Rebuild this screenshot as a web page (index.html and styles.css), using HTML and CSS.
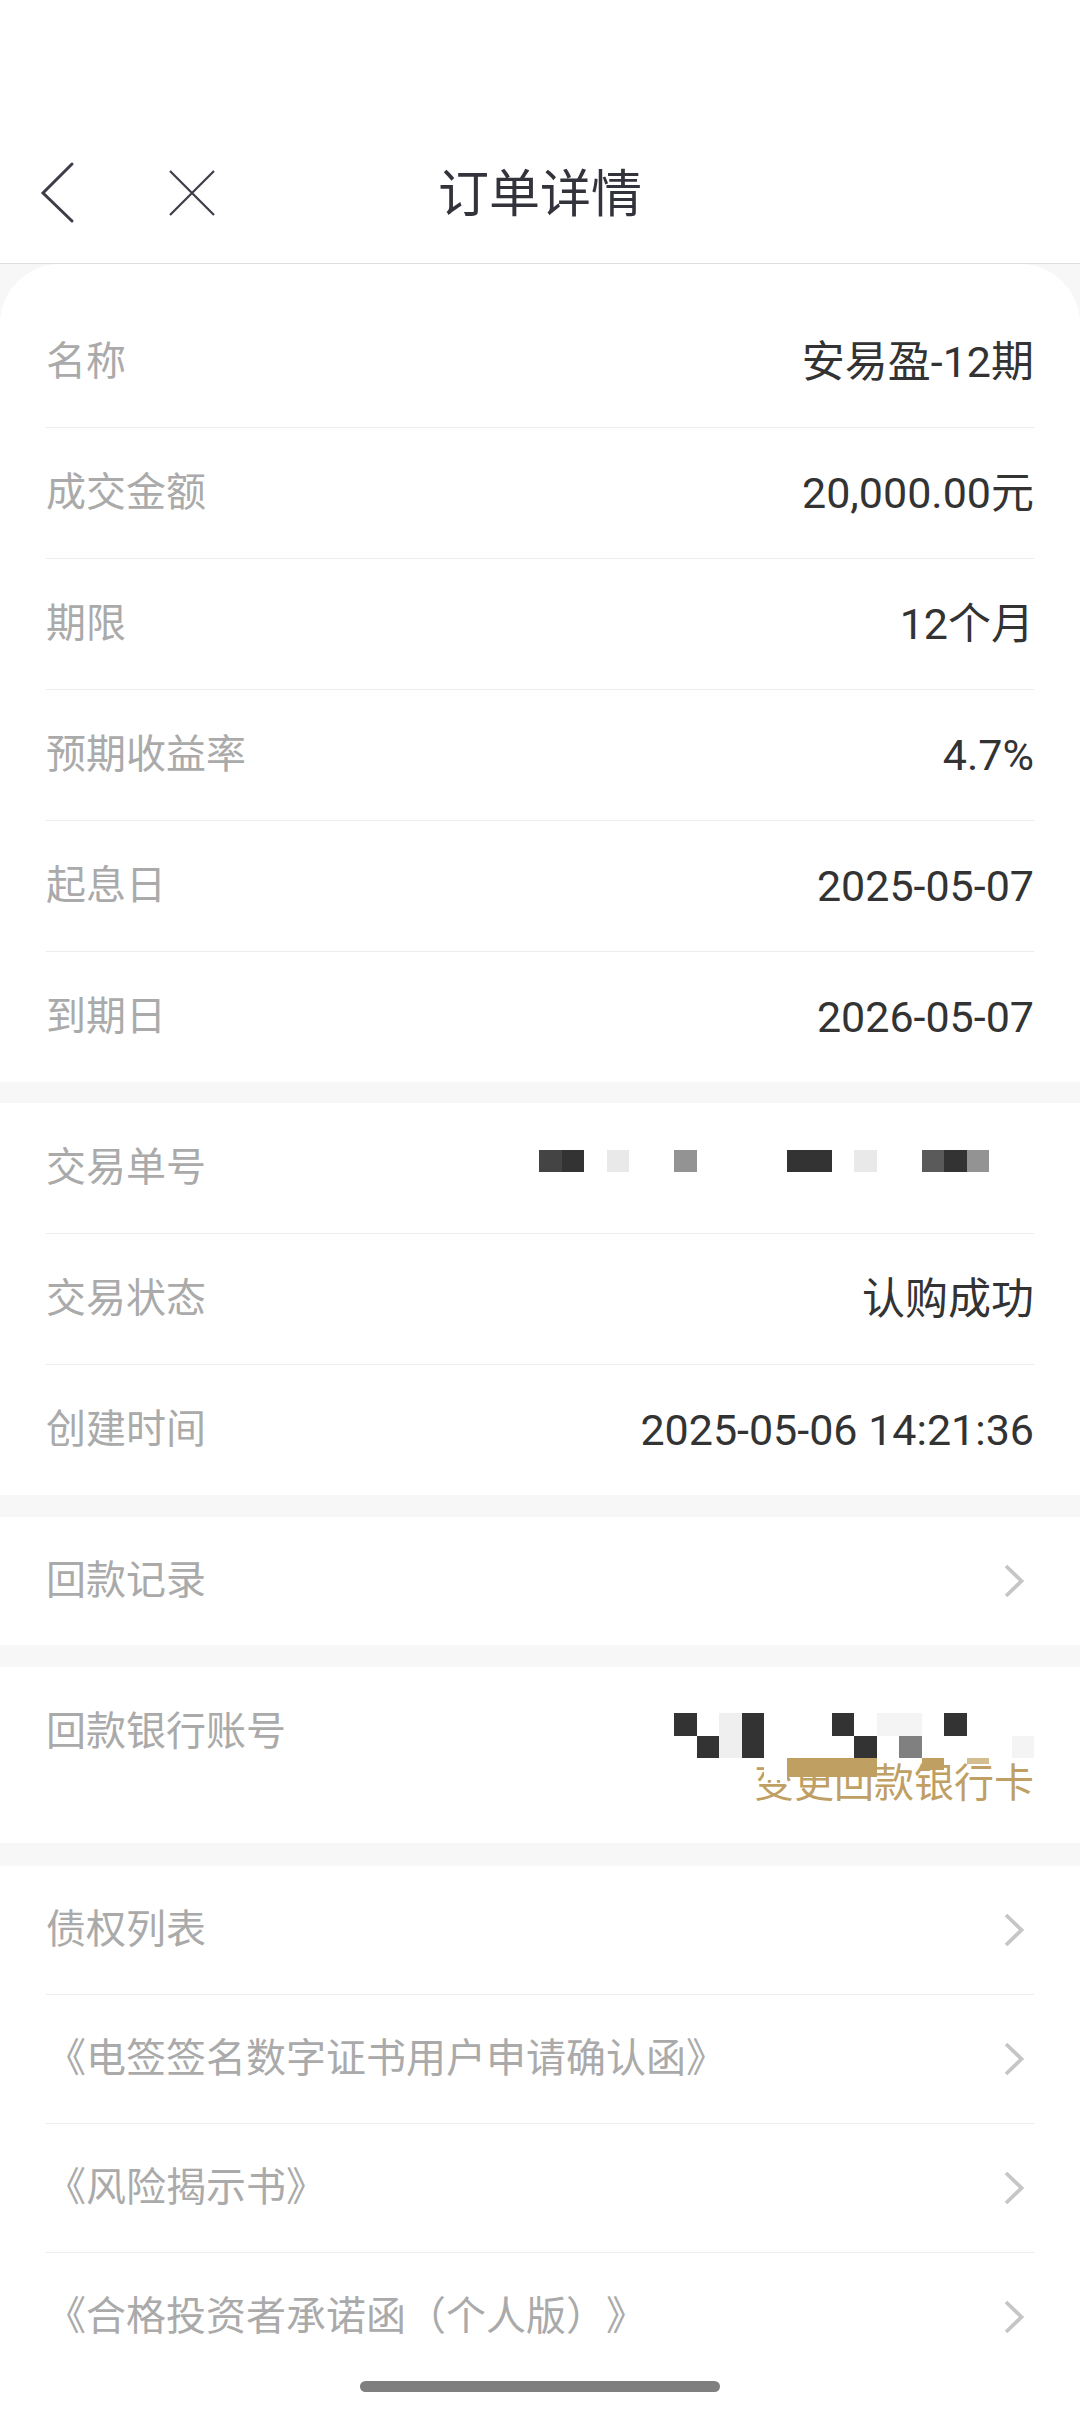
FILE: index.html
```html
<!DOCTYPE html>
<html lang="zh-CN">
<head>
<meta charset="utf-8">
<title>订单详情</title>
<link rel="stylesheet" href="styles.css">
</head>
<body>
<div class="page">
  <div class="statusbar"></div>
  <header class="header">
    <div class="nav">
      <svg class="back" width="40" height="64" viewBox="0 0 40 64"><polyline points="34,3 5,32 34,60"/></svg>
      <svg class="close" width="52" height="52" viewBox="0 0 52 52"><path d="M4 4 L48 48 M48 4 L4 48"/></svg>
    </div>
    <h1 class="title">订单详情</h1>
    <div class="spacer"></div>
  </header>

  <main class="content">
    <section class="card card-top">
      <div class="row"><span class="label">名称</span><span class="value">安易盈-12期</span></div>
      <div class="row"><span class="label">成交金额</span><span class="value">20,000.00元</span></div>
      <div class="row"><span class="label">期限</span><span class="value">12个月</span></div>
      <div class="row"><span class="label">预期收益率</span><span class="value">4.7%</span></div>
      <div class="row"><span class="label">起息日</span><span class="value">2025-05-07</span></div>
      <div class="row"><span class="label">到期日</span><span class="value">2026-05-07</span></div>
    </section>

    <section class="card card-trade">
      <div class="row">
        <span class="label">交易单号</span>
        <div class="mosaic mosaic-order">
          <i class="d2"></i><i class="d"></i><i></i><i class="l"></i><i></i><i></i><i class="g"></i><i></i><i></i><i></i><i></i>
          <i class="d"></i><i class="d"></i><i></i><i class="l"></i><i></i><i></i><i class="m"></i><i class="d"></i><i class="g"></i><i></i><i></i>
        </div>
      </div>
      <div class="row"><span class="label">交易状态</span><span class="value">认购成功</span></div>
      <div class="row"><span class="label">创建时间</span><span class="value">2025-05-06 14:21:36</span></div>
    </section>

    <section class="card card-gap">
      <div class="link-row"><span class="label">回款记录</span><svg class="chev" width="24" height="36" viewBox="0 0 24 36"><polyline points="4,3 19.5,18 4,33"/></svg></div>
    </section>

    <section class="card card-gap bank">
      <span class="label">回款银行账号</span>
      <div class="acct">
        <div class="mosaic mosaic-acct">
          <i class="d"></i><i></i><i class="l2"></i><i class="d"></i><i></i><i></i><i></i><i class="d"></i><i></i><i class="vl"></i><i class="vl"></i><i></i><i class="d"></i><i></i><i></i><i></i>
          <i></i><i class="d"></i><i class="l2"></i><i class="d"></i><i></i><i></i><i></i><i></i><i class="d"></i><i></i><i class="g2"></i><i></i><i></i><i></i><i></i><i class="vl"></i>
        </div>
        <span class="change">变更回款银行卡</span>
        <div class="mosaic mosaic-over">
          <i></i><i></i><i></i><i></i><i class="wh"></i><i class="o"></i><i class="o"></i><i class="o"></i><i class="o"></i><i></i><i></i><i class="o o-short"></i><i></i><i class="o o-tiny"></i><i></i><i></i>
        </div>
      </div>
    </section>

    <section class="card card-gap card-docs">
      <div class="link-row"><span class="label">债权列表</span><svg class="chev" width="24" height="36" viewBox="0 0 24 36"><polyline points="4,3 19.5,18 4,33"/></svg></div>
      <div class="link-row"><span class="label">《电签签名数字证书用户申请确认函》</span><svg class="chev" width="24" height="36" viewBox="0 0 24 36"><polyline points="4,3 19.5,18 4,33"/></svg></div>
      <div class="link-row"><span class="label">《风险揭示书》</span><svg class="chev" width="24" height="36" viewBox="0 0 24 36"><polyline points="4,3 19.5,18 4,33"/></svg></div>
      <div class="link-row"><span class="label">《合格投资者承诺函（个人版）》</span><svg class="chev" width="24" height="36" viewBox="0 0 24 36"><polyline points="4,3 19.5,18 4,33"/></svg></div>
    </section>
  </main>

  <div class="home-indicator"></div>
</div>
</body>
</html>
```

FILE: styles.css
```css
* {
  box-sizing: border-box;
  margin: 0;
  padding: 0;
}

html,
body {
  width: 1080px;
  height: 2412px;
  overflow: hidden;
}

body {
  background: #f7f7f7;
  font-family: Roboto, "Noto Sans CJK SC", sans-serif;
  color: #333;
  text-spacing-trim: space-all;
}

.page {
  position: relative;
  height: 2412px;
}

.statusbar {
  height: 126px;
  background: #fff;
}

.header {
  height: 138px;
  background: #fff;
  border-bottom: 1px solid #dedede;
  display: grid;
  grid-template-columns: 1fr auto 1fr;
  align-items: center;
}

.nav {
  display: flex;
  align-items: center;
  gap: 88px;
  padding-left: 38px;
}

.nav svg {
  margin-bottom: 4px;
  fill: none;
  stroke: #3d3d47;
}

.back {
  stroke-width: 3;
  stroke-linecap: round;
  stroke-linejoin: miter;
}

.close {
  stroke-width: 2.2;
}

.title {
  font-size: 51px;
  font-weight: 400;
  line-height: 60px;
  color: #33333b;
}

.content {
  display: flex;
  flex-direction: column;
}

.card {
  background: #fff;
}

.card-top {
  border-radius: 60px 60px 0 0;
  padding-top: 33px;
}

.card-trade {
  margin-top: 21px;
}

.card-gap {
  margin-top: 22px;
}

.card-docs {
  margin-top: 23px;
  padding-bottom: 40px;
}

.row {
  height: 131px;
  margin: 0 46px;
  display: flex;
  align-items: center;
  justify-content: space-between;
  border-bottom: 1px solid #ececec;
}

.row:last-child {
  height: 130px;
  border-bottom: none;
}

.link-row {
  height: 129px;
  margin: 0 46px;
  display: flex;
  align-items: center;
  justify-content: space-between;
  border-bottom: 1px solid #ececec;
}

.link-row:last-child {
  height: 128px;
  border-bottom: none;
}

.label {
  font-size: 40px;
  line-height: 50px;
  color: #aaaaaa;
}

.value {
  font-size: 43px;
  line-height: 50px;
  color: #333;
}

.chev {
  margin-right: 8px;
  fill: none;
  stroke: #c6c6c6;
  stroke-width: 3.8;
  stroke-linejoin: miter;
}

/* pixelated (masked) values */
.mosaic {
  display: grid;
  grid-template-columns: repeat(22, 22.5px);
  grid-auto-rows: 22.5px;
}

.mosaic i {
  display: block;
}

.mosaic-order {
  margin-bottom: 14px;
}

.mosaic-acct,
.mosaic-over {
  grid-template-columns: repeat(16, 22.5px);
}

.mosaic-over {
  position: absolute;
  top: 45px;
  right: 0;
  align-items: start;
}

.mosaic .d { background: #333; }
.mosaic .d2 { background: #444; }
.mosaic .m { background: #5a5a5a; }
.mosaic .g { background: #939393; }
.mosaic .g2 { background: #808080; }
.mosaic .l { background: #e9e9e9; }
.mosaic .l2 { background: #efefef; }
.mosaic .vl { background: #f4f4f4; }
.mosaic .wh { background: #fff; height: 22px; }
.mosaic .o { background: #c0a062; height: 19px; }
.mosaic .o-short { height: 12px; }
.mosaic .o-tiny { height: 6px; background: #d4bd8f; }

.bank {
  height: 176px;
  padding: 40px 46px 0;
  display: flex;
  justify-content: space-between;
  align-items: flex-start;
}

.acct {
  position: relative;
  margin-top: 6px;
  display: flex;
  flex-direction: column;
  align-items: flex-end;
}

.change {
  margin-top: 1px;
  font-size: 40px;
  line-height: 50px;
  color: #bf9f63;
}

.home-indicator {
  position: absolute;
  left: 360px;
  bottom: 20px;
  width: 360px;
  height: 11px;
  border-radius: 6px;
  background: #7f7f7f;
}
```
